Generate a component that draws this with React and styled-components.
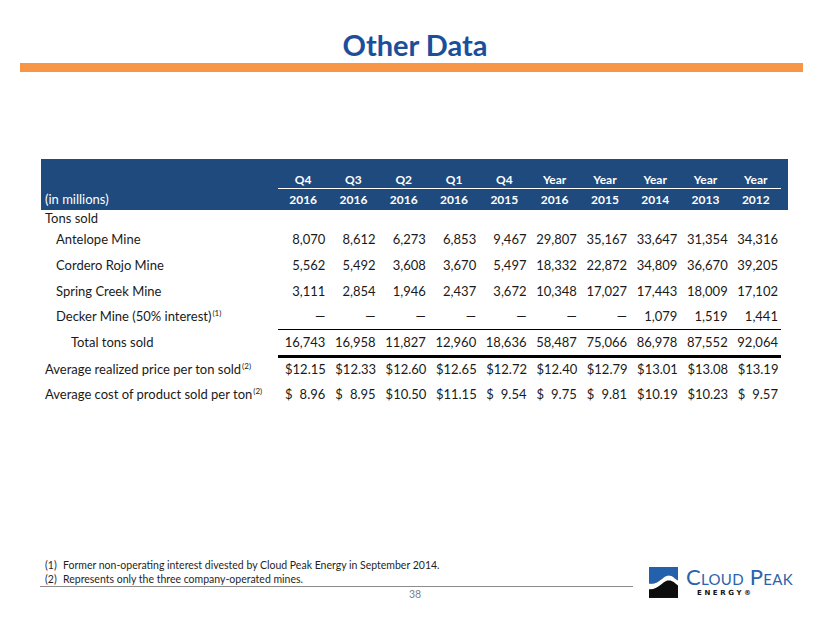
import React from "react";
import styled, { createGlobalStyle } from "styled-components";

const GlobalStyle = createGlobalStyle`
  body {
    margin: 0;
    background: #ffffff;
    font-family: Lato, "Open Sans", sans-serif;
  }
`;

const COLS = "237px repeat(10, 50.3px) 7px";

const Page = styled.div`
  width: 830px;
  height: 623px;
  display: flex;
  flex-direction: column;
  background: #ffffff;
  overflow: hidden;
`;

const Title = styled.h1`
  margin: 0;
  padding-top: 28px;
  text-align: center;
  font-family: Lato, sans-serif;
  font-weight: 700;
  font-size: 29px;
  line-height: 34px;
  color: #1b4f9c;
`;

const OrangeRule = styled.div`
  margin: 1px 0 0 20px;
  width: 783px;
  height: 9px;
  background: #f79646;
`;

const Table = styled.div`
  margin: 87px 0 0 41px;
  width: 747px;
  color: #1a1a1a;
  font-size: 13px;
`;

const HeadBand = styled.div`
  background: #1f4a7e;
  padding-top: 12px;
  color: #ffffff;
`;

const Row = styled.div`
  display: grid;
  grid-template-columns: ${COLS};
  align-items: start;
`;

const HeadCell = styled.div`
  text-align: center;
  font-weight: 700;
  font-size: 12px;
  line-height: ${(p) => p.$lh}px;
  border-bottom: ${(p) => (p.$rule ? "1px solid #ffffff" : "none")};
`;

const HeadLabel = styled.div`
  padding-left: 4px;
  font-size: 13px;
  line-height: ${(p) => p.$lh}px;
`;

const Label = styled.div`
  padding-left: ${(p) => p.$indent}px;
  line-height: ${(p) => p.$lh}px;
  white-space: nowrap;
`;

const Num = styled.div`
  text-align: right;
  padding-right: 3px;
  line-height: ${(p) => p.$lh}px;
  border-bottom: ${(p) => (p.$rule ? `${p.$rule}px solid #000000` : "none")};
`;

const Money = styled.div`
  display: flex;
  justify-content: space-between;
  padding: 0 3px 0 7px;
  line-height: ${(p) => p.$lh}px;
`;

const Sup = styled.sup`
  font-size: 8px;
  line-height: 0;
  vertical-align: 5px;
  margin-left: 1px;
`;

const Footer = styled.div`
  margin-top: auto;
  padding-bottom: 22px;
  display: grid;
  grid-template-columns: 40px 593px 16px 1fr;
  grid-template-rows: auto auto;
`;

const Notes = styled.div`
  grid-column: 2;
  grid-row: 1;
  border-bottom: 1px solid #8c8c8c;
  font-size: 10.5px;
  line-height: 14px;
  color: #1f1f1f;
`;

const Note = styled.div`
  display: flex;
  padding-left: 5px;
`;

const NoteMark = styled.span`
  width: 18px;
  flex: none;
`;

const PageNum = styled.div`
  grid-column: 1 / -1;
  grid-row: 2;
  text-align: center;
  font-size: 10.5px;
  line-height: 14px;
  color: #7f7f7f;
`;

const Logo = styled.div`
  grid-column: 4;
  grid-row: 1 / 3;
  align-self: start;
  margin-top: 9px;
  display: flex;
  align-items: flex-start;
`;

const LogoText = styled.div`
  margin-left: 8px;
  display: flex;
  flex-direction: column;
`;

const LogoName = styled.div`
  font-family: Lato, sans-serif;
  font-variant: small-caps;
  font-weight: 400;
  font-size: 22px;
  line-height: 20px;
  color: #2a62ad;
  letter-spacing: 0.3px;
`;

const LogoSub = styled.div`
  margin: 2px 0 0 11px;
  font-family: "DejaVu Sans", sans-serif;
  font-weight: 700;
  font-size: 7px;
  line-height: 9px;
  letter-spacing: 2.6px;
  color: #111111;
`;

const cols = [
  ["Q4", "2016"],
  ["Q3", "2016"],
  ["Q2", "2016"],
  ["Q1", "2016"],
  ["Q4", "2015"],
  ["Year", "2016"],
  ["Year", "2015"],
  ["Year", "2014"],
  ["Year", "2013"],
  ["Year", "2012"],
];

const D = "—";

const tonRows = [
  { label: "Antelope Mine", indent: 15, lh: 26, values: ["8,070", "8,612", "6,273", "6,853", "9,467", "29,807", "35,167", "33,647", "31,354", "34,316"] },
  { label: "Cordero Rojo Mine", indent: 15, lh: 26, values: ["5,562", "5,492", "3,608", "3,670", "5,497", "18,332", "22,872", "34,809", "36,670", "39,205"] },
  { label: "Spring Creek Mine", indent: 15, lh: 26, values: ["3,111", "2,854", "1,946", "2,437", "3,672", "10,348", "17,027", "17,443", "18,009", "17,102"] },
  { label: "Decker Mine (50% interest)", sup: "(1)", indent: 15, lh: 25, rule: 1, values: [D, D, D, D, D, D, D, "1,079", "1,519", "1,441"] },
  { label: "Total tons sold", indent: 30, lh: 25, rule: 3, values: ["16,743", "16,958", "11,827", "12,960", "18,636", "58,487", "75,066", "86,978", "87,552", "92,064"] },
];

const moneyRows = [
  { label: "Average realized price per ton sold", lh: 23, values: ["12.15", "12.33", "12.60", "12.65", "12.72", "12.40", "12.79", "13.01", "13.08", "13.19"] },
  { label: "Average cost of product sold per ton", lh: 27, values: ["8.96", "8.95", "10.50", "11.15", "9.54", "9.75", "9.81", "10.19", "10.23", "9.57"] },
];

const LogoMark = () => (
  <svg width="29" height="31" viewBox="0 0 30 32">
    <rect width="30" height="32" fill="#0d0d0d" />
    <path d="M0 0 H30 V14 C26 12 24 8 19 9 C14 10 9 19 0 17 Z" fill="#2461ac" />
    <path d="M0 17 C9 19 14 10 19 9 C24 8 26 12 30 14 V19 C26 16 24 13 19 14 C14 15 9 24 0 23 Z" fill="#ffffff" />
  </svg>
);

const App = () => {
  return (
    <Page>
      <GlobalStyle />
      <Title>Other Data</Title>
      <OrangeRule />
      <Table>
        <HeadBand>
          <Row>
            <HeadLabel $lh={17} />
            {cols.map((c, i) => (
              <HeadCell key={i} $lh={17} $rule>
                {c[0]}
              </HeadCell>
            ))}
          </Row>
          <Row>
            <HeadLabel $lh={21}>(in millions)</HeadLabel>
            {cols.map((c, i) => (
              <HeadCell key={i} $lh={21}>
                {c[1]}
              </HeadCell>
            ))}
          </Row>
        </HeadBand>
        <Row>
          <Label $indent={4} $lh={16}>Tons sold</Label>
        </Row>
        {tonRows.map((r) => (
          <Row key={r.label}>
            <Label $indent={r.indent} $lh={r.lh}>
              {r.label}
              {r.sup && <Sup>{r.sup}</Sup>}
            </Label>
            {r.values.map((v, i) => (
              <Num key={i} $lh={r.lh} $rule={r.rule}>
                {v}
              </Num>
            ))}
          </Row>
        ))}
        {moneyRows.map((r) => (
          <Row key={r.label}>
            <Label $indent={4} $lh={r.lh}>
              {r.label}
              <Sup>(2)</Sup>
            </Label>
            {r.values.map((v, i) => (
              <Money key={i} $lh={r.lh}>
                <span>$</span>
                <span>{v}</span>
              </Money>
            ))}
          </Row>
        ))}
      </Table>
      <Footer>
        <Notes>
          <Note>
            <NoteMark>(1)</NoteMark>
            Former non-operating interest divested by Cloud Peak Energy in September 2014.
          </Note>
          <Note>
            <NoteMark>(2)</NoteMark>
            Represents only the three company-operated mines.
          </Note>
        </Notes>
        <PageNum>38</PageNum>
        <Logo>
          <LogoMark />
          <LogoText>
            <LogoName>Cloud Peak</LogoName>
            <LogoSub>ENERGY®</LogoSub>
          </LogoText>
        </Logo>
      </Footer>
    </Page>
  );
};

export default App;
